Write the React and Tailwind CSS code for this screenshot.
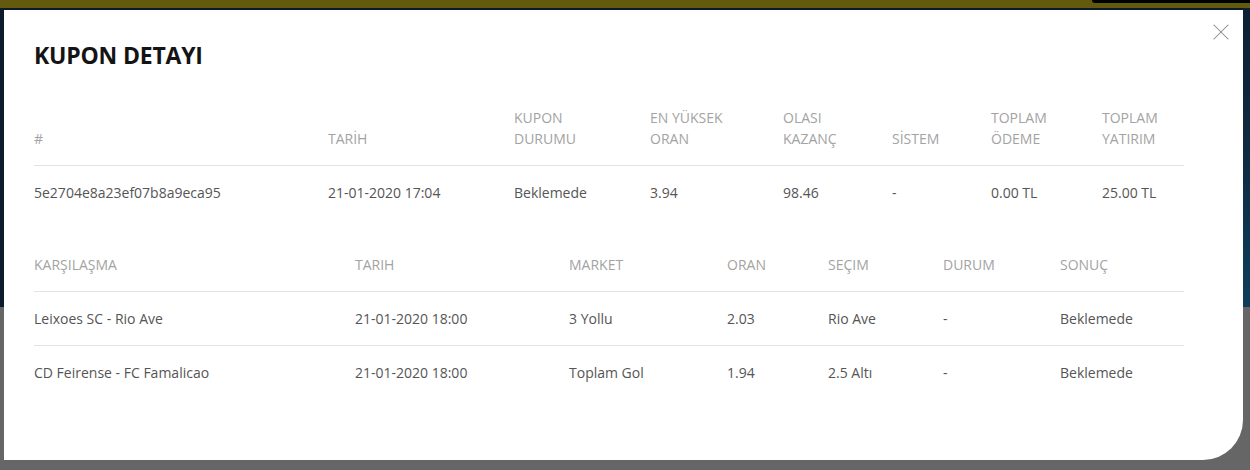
import { X } from "lucide-react";

const couponHead = [
  [["#"], "w-[294px]"],
  [["TARİH"], "w-[186px]"],
  [["KUPON", "DURUMU"], "w-[136px]"],
  [["EN YÜKSEK", "ORAN"], "w-[133px]"],
  [["OLASI", "KAZANÇ"], "w-[109px]"],
  [["SİSTEM"], "w-[99px]"],
  [["TOPLAM", "ÖDEME"], "w-[111px]"],
  [["TOPLAM", "YATIRIM"], "w-[82px]"],
];

const couponRow = [
  "5e2704e8a23ef07b8a9eca95",
  "21-01-2020 17:04",
  "Beklemede",
  "3.94",
  "98.46",
  "-",
  "0.00 TL",
  "25.00 TL",
];

const matchHead = [
  ["KARŞILAŞMA", "w-[321px]"],
  ["TARIH", "w-[214px]"],
  ["MARKET", "w-[158px]"],
  ["ORAN", "w-[101px]"],
  ["SEÇIM", "w-[115px]"],
  ["DURUM", "w-[117px]"],
  ["SONUÇ", "w-[124px]"],
];

const matches = [
  ["Leixoes SC - Rio Ave", "21-01-2020 18:00", "3 Yollu", "2.03", "Rio Ave", "-", "Beklemede"],
  ["CD Feirense - FC Famalicao", "21-01-2020 18:00", "Toplam Gol", "1.94", "2.5 Altı", "-", "Beklemede"],
];

const App = () => {
  return (
    <div
      className="relative h-[470px] w-[1250px] overflow-hidden"
      style={{ fontFamily: '"Open Sans", "Noto Sans", sans-serif' }}
    >
      {/* page behind the overlay */}
      <div className="h-2 bg-[#635a0d]" />
      <div className="h-[299px] bg-[#0b1b2b]" />
      <div className="h-[163px] bg-[#666666]" />
      <div className="absolute right-0 top-0 h-[3px] w-[158px] rounded-bl-full bg-black" />
      <div className="absolute right-0 top-[8px] h-[299px] w-[7px] bg-gradient-to-b from-[#0d2033] via-[#0e2b42] to-[#0d3e5a]" />

      {/* modal */}
      <div className="absolute left-[4px] top-[10px] h-[450px] w-[1239px] rounded-br-[40px] bg-white pl-[30px] pt-[30px]">
        <button className="absolute right-[8px] top-[8px] text-[#8a8a8a]">
          <X size={28} strokeWidth={0.9} />
        </button>

        <h2 className="text-[23px] font-bold leading-[30px] tracking-[-0.2px] text-[#141414]">
          KUPON DETAYI
        </h2>

        <div className="mt-[21px] w-[1150px] text-[14px] leading-[21px]">
          <div className="flex items-end border-b border-[#e3e3e3] py-4 text-[#a3a3a3]">
            {couponHead.map(([lines, w]) => (
              <div key={lines.join()} className={`${w} shrink-0`}>
                {lines.map((l) => (
                  <div key={l} className="whitespace-nowrap">
                    {l}
                  </div>
                ))}
              </div>
            ))}
          </div>
          <div className="flex py-4 text-[#555555]">
            {couponRow.map((v, i) => (
              <div key={i} className={`${couponHead[i][1]} shrink-0`}>
                {v}
              </div>
            ))}
          </div>
        </div>

        <div className="mt-[19px] w-[1150px] text-[14px] leading-[21px]">
          <div className="flex border-b border-[#e3e3e3] py-4 text-[#a3a3a3]">
            {matchHead.map(([label, w]) => (
              <div key={label} className={`${w} shrink-0`}>
                {label}
              </div>
            ))}
          </div>
          {matches.map((row, r) => (
            <div
              key={r}
              className={`flex py-4 text-[#555555] ${r === 0 ? "border-b border-[#e3e3e3]" : ""}`}
            >
              {row.map((v, i) => (
                <div key={i} className={`${matchHead[i][1]} shrink-0`}>
                  {v}
                </div>
              ))}
            </div>
          ))}
        </div>
      </div>
    </div>
  );
};

export default App;
